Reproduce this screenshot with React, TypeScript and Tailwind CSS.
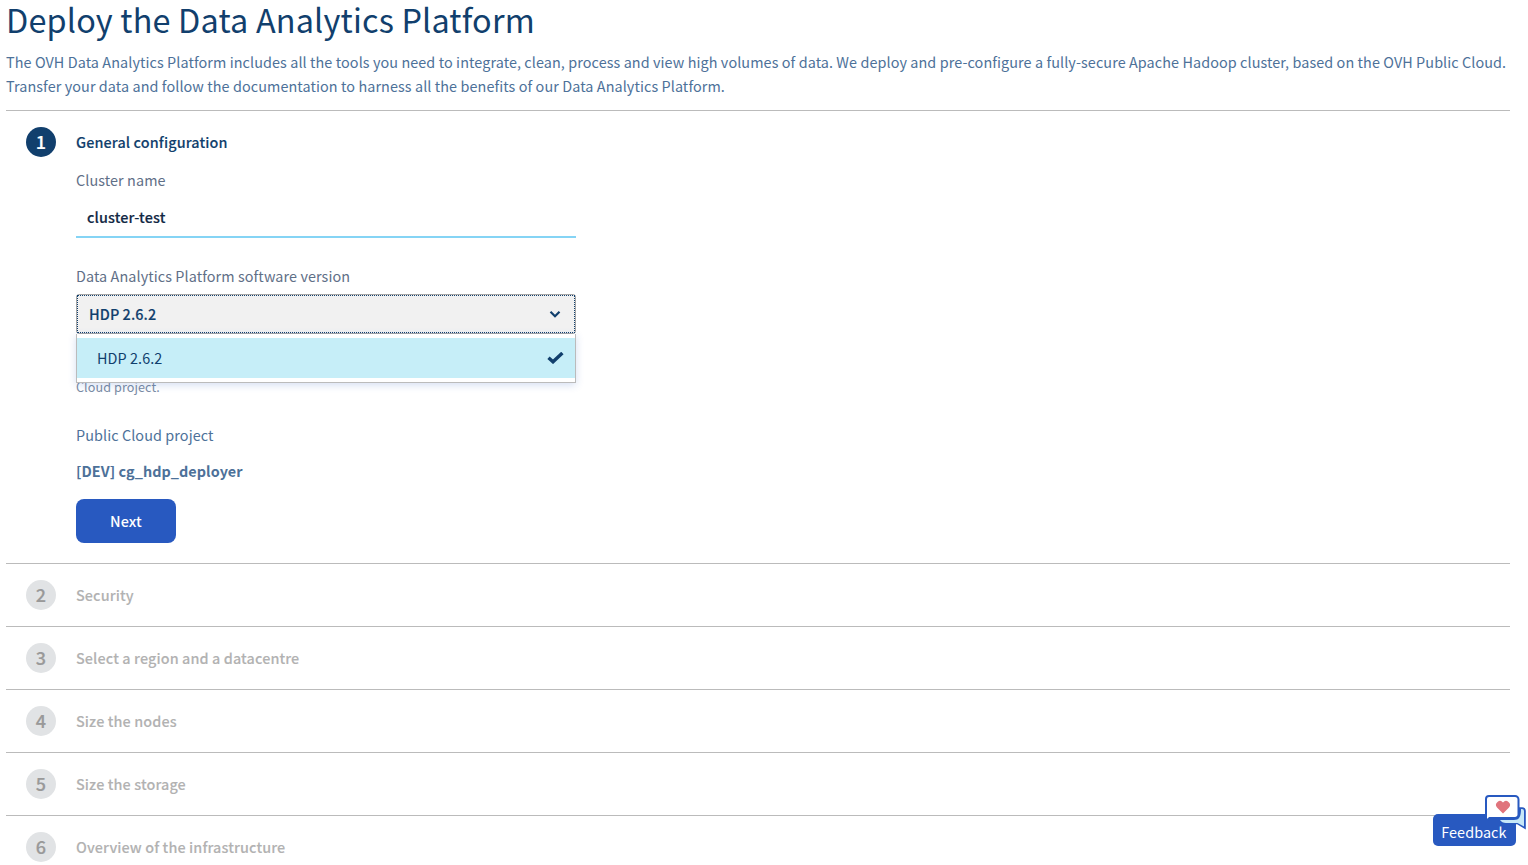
import React from 'react';

const futureSteps = [
  'Security',
  'Select a region and a datacentre',
  'Size the nodes',
  'Size the storage',
  'Overview of the infrastructure',
];

function StepBadge({ number, active }: { number: number; active?: boolean }) {
  return (
    <span
      className={`flex h-[30px] w-[30px] shrink-0 items-center justify-center rounded-full pb-0.5 text-[18px] font-medium leading-7 [-webkit-text-stroke:0.2px] ${
        active ? 'bg-[#113f6d] text-white' : 'bg-[#e1e3e5] text-[#999]'
      }`}
    >
      {number}
    </span>
  );
}

function VersionSelect() {
  return (
    <div className="relative mt-1.5 h-10 w-[500px]">
      <button
        type="button"
        className="flex h-10 w-full items-center justify-between rounded-[3px] border border-[#a5a5a5] bg-[#f1f1f1] text-left font-medium text-[#113f6d] [-webkit-text-stroke:0.15px]"
      >
        <span className="flex h-full w-full items-center justify-between border border-dotted border-[#113f6d] pr-[13px] pl-[11px]">
          HDP 2.6.2
          <svg viewBox="0 0 12 8" className="h-2 w-3 fill-none stroke-[#113f6d] stroke-[2.2]">
            <path d="M1.5 1.8 6 6.2 10.500 1.8" />
          </svg>
        </span>
      </button>
      <ul className="absolute top-10 left-0 z-10 w-[500px] border border-t-0 border-[#bbb] bg-white py-1 shadow-[0_2px_8px_rgba(40,89,192,0.2)]">
        <li className="flex h-10 items-center justify-between bg-[#c6eef8] pr-[11.5px] pl-5 text-[#113f6d]">
          HDP 2.6.2
          <svg viewBox="0 0 17 12" className="h-3 w-[17px] fill-none stroke-[#113f6d] stroke-[3.4]">
            <path d="M1.5 5.8 6 9.8 15.4 1" />
          </svg>
        </li>
      </ul>
    </div>
  );
}

function FeedbackButton() {
  return (
    <button
      type="button"
      className="fixed top-[814px] left-[1433.4px] h-8 w-[83px] rounded-[5px] bg-[#2859c0] pr-0.5 text-center leading-9 text-white"
    >
      Feedback
      <svg viewBox="0 0 42 36" className="absolute -top-5 left-[50.6px] h-9 w-[42px]">
        <path
          d="M34 14h4a3 3 0 0 1 3 3v17l-7.5-4.500H22c-3 0-5-1.5-5.500-4z"
          fill="#2859c0"
          stroke="#2859c0"
          strokeWidth="1.6"
        />
        <path d="M16 26h14c5 0 7-3 7-11h1q2 0 2 2v15.500l-6.500-3.500H22q-4 0-6-3z" fill="#c6e8f8" />
        <path
          d="M5 2h26a3.500 3.500 0 0 1 3.500 3.500v15A3.500 3.500 0 0 1 31 24H5.500L2 27V5a3 3 0 0 1 3-3z"
          fill="#fff"
          stroke="#2859c0"
          strokeWidth="2"
        />
        <path d="M19 19.500l-6-6a3.900 3.900 0 0 1 6-5 3.900 3.900 0 0 1 6 5z" fill="#e0747c" />
      </svg>
    </button>
  );
}

export default function App() {
  return (
    <main className="h-[865px] overflow-hidden bg-white pr-[18px] pl-1.5 font-['Noto_Sans_CJK_SC',sans-serif] text-[14.4px] leading-6 tracking-[0.084px] text-[#4d7199]">
      <h1 className="h-[50px] text-[32.4px] leading-[38px] tracking-[0.17px] whitespace-nowrap text-[#113f6d]">
        Deploy the Data Analytics Platform
      </h1>
      <p className="h-[60px] whitespace-nowrap">
        The OVH Data Analytics Platform includes all the tools you need to integrate, clean, process and view high
        volumes of data. We deploy and pre-configure a fully-secure Apache Hadoop cluster, based on the OVH Public
        Cloud.
        <br />
        Transfer your data and follow the documentation to harness all the benefits of our Data Analytics Platform.
      </p>

      <section className="flex h-[453px] gap-5 border-t border-[#bbb] pt-4 pl-5">
        <StepBadge number={1} active />
        <div className="flex flex-col items-start">
          <h2 className="h-[30px] leading-[30px] font-medium tracking-[0.12px] text-[#113f6d] [-webkit-text-stroke:0.12px]">
            General configuration
          </h2>
          <label className="mt-[11px] text-[#5f6f87]">Cluster name</label>
          <input
            defaultValue="cluster-test"
            className="mt-[5px] h-[41px] w-[500px] border-b-2 border-[#85d4f5] pl-[11px] font-medium tracking-[0.13px] text-[#122844] outline-none [-webkit-text-stroke:0.15px]"
          />
          <label className="mt-[26px] text-[#5f6f87]">Data Analytics Platform software version</label>
          <VersionSelect />
          <p className="mt-[41px] text-[12.6px] text-[#7a8ba3]">Cloud project.</p>
          <p className="mt-6">Public Cloud project</p>
          <p className="mt-3 font-bold tracking-[0.06px]">[DEV] cg_hdp_deployer</p>
          <button
            type="button"
            className="mt-4 h-11 w-[100px] rounded-lg bg-[#2859c0] font-medium text-white"
          >
            Next
          </button>
        </div>
      </section>

      {futureSteps.map((title, index) => (
        <section key={title} className="flex h-[63px] gap-5 border-t border-[#bbb] pt-4 pl-5">
          <StepBadge number={index + 2} />
          <h2 className="leading-[30px] font-medium tracking-[0.11px] text-[#b2b2b2] [-webkit-text-stroke:0.1px]">
            {title}
          </h2>
        </section>
      ))}

      <FeedbackButton />
    </main>
  );
}
